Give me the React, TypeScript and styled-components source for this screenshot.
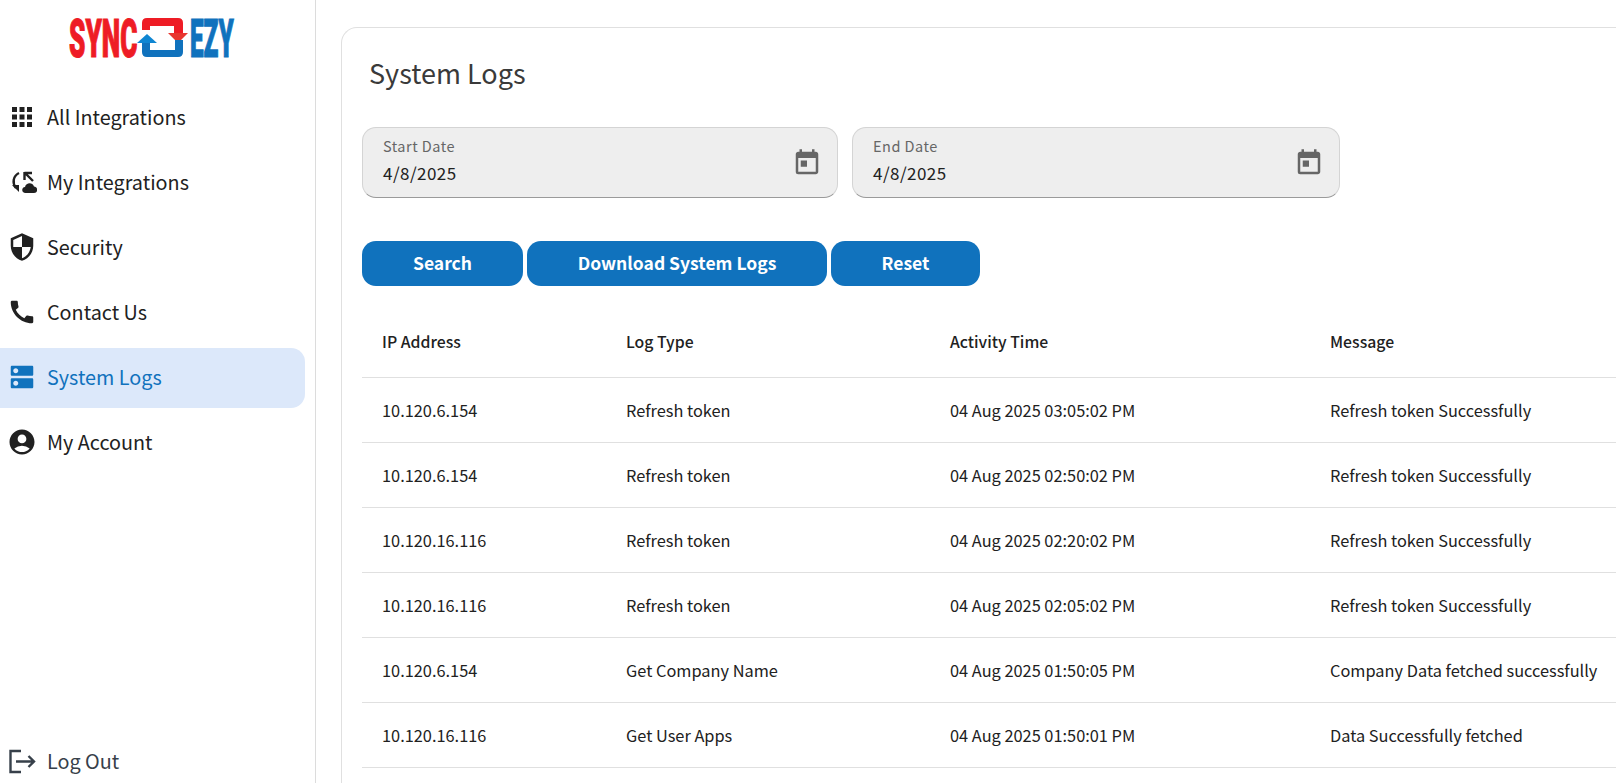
import React from "react";
import styled, { createGlobalStyle } from "styled-components";
import { MdApps, MdSecurity, MdCall, MdDns, MdAccountCircle, MdToday } from "react-icons/md";

const GlobalStyle = createGlobalStyle`
  html, body {
    margin: 0;
    padding: 0;
    height: 100%;
    overflow: hidden;
    background: #fff;
  }
  body {
    font-family: "Noto Sans CJK SC", "Noto Sans", sans-serif;
    color: #212121;
  }
`;

const Page = styled.div`
  display: flex;
  width: 1616px;
  height: 783px;
  overflow: hidden;
`;

const Sidebar = styled.aside`
  flex: 0 0 316px;
  box-sizing: border-box;
  border-right: 1px solid #dcdcdc;
  display: flex;
  flex-direction: column;
  padding: 18px 10px 0 0;
`;

const LogoWrap = styled.div`
  height: 40px;
  padding-left: 69px;
  margin-bottom: 30px;
  svg {
    display: block;
    margin-top: -14px;
  }
`;

const NavList = styled.nav`
  display: flex;
  flex-direction: column;
  gap: 5px;
`;

const NavItem = styled.div<{ $active?: boolean }>`
  box-sizing: border-box;
  height: 60px;
  display: flex;
  align-items: center;
  gap: 10px;
  padding: 0 0 2px 7px;
  border-radius: 0 14px 14px 0;
  font-size: 19.8px;
  line-height: 28px;
  background: ${(p) => (p.$active ? "#dce8fa" : "transparent")};
  color: ${(p) => (p.$active ? "#1072bd" : "#212121")};
  svg {
    width: 30px;
    height: 30px;
    flex: none;
  }
`;

const LogoutRow = styled(NavItem)`
  height: 40px;
  margin-top: auto;
  margin-bottom: 1px;
  color: #37404a;
`;

const Main = styled.main`
  flex: 1;
  min-width: 0;
  padding: 27px 0 0 25px;
`;

const Card = styled.section`
  box-sizing: border-box;
  height: 800px;
  border: 1px solid #e0e0e0;
  border-right: none;
  border-radius: 16px 0 0 0;
  padding: 27px 0 0 20px;
`;

const Title = styled.h1`
  margin: 0 0 36px 7px;
  font-size: 27px;
  line-height: 36px;
  font-weight: 400;
  color: #3a3a3a;
`;

const Fields = styled.div`
  display: flex;
  gap: 14px;
  margin-bottom: 43px;
`;

const Field = styled.div<{ $width: number }>`
  box-sizing: border-box;
  width: ${(p) => p.$width}px;
  height: 71px;
  background: #eeeeee;
  border: 1px solid #d4d4d4;
  border-bottom-color: #9a9a9a;
  border-radius: 14px;
  padding: 8px 15px 0 20px;
  display: flex;
  align-items: center;
  justify-content: space-between;
`;

const FieldText = styled.div`
  display: flex;
  flex-direction: column;
  align-self: flex-start;
`;

const FieldLabel = styled.span`
  font-size: 14.5px;
  line-height: 20px;
  letter-spacing: 0.5px;
  color: #666;
`;

const FieldValue = styled.span`
  font-size: 17px;
  line-height: 33px;
  letter-spacing: 0.45px;
  color: #212121;
`;

const CalendarIcon = styled(MdToday)`
  width: 30px;
  height: 30px;
  color: #666;
  margin-top: -8px;
`;

const Buttons = styled.div`
  display: flex;
  gap: 4px;
  margin-bottom: 21px;
`;

const Button = styled.button<{ $width: number }>`
  width: ${(p) => p.$width}px;
  height: 45px;
  padding: 0 0 3px;
  border: none;
  border-radius: 14px;
  background: #1072bd;
  color: #fff;
  font-family: inherit;
  font-size: 17.5px;
  font-weight: 700;
`;

const Table = styled.div`
  width: 1300px;
`;

const Row = styled.div<{ $head?: boolean }>`
  display: grid;
  grid-template-columns: 244px 324px 380px 1fr;
  align-items: center;
  box-sizing: border-box;
  height: ${(p) => (p.$head ? 71 : 65)}px;
  padding: 0 0 ${(p) => (p.$head ? 2 : 1)}px 20px;
  border-bottom: 1px solid #e0e0e0;
  font-size: ${(p) => (p.$head ? 15.8 : 16.35)}px;
  font-weight: ${(p) => (p.$head ? 500 : 400)};
  color: #212121;
`;

const rows = [
  ["10.120.6.154", "Refresh token", "04 Aug 2025 03:05:02 PM", "Refresh token Successfully"],
  ["10.120.6.154", "Refresh token", "04 Aug 2025 02:50:02 PM", "Refresh token Successfully"],
  ["10.120.16.116", "Refresh token", "04 Aug 2025 02:20:02 PM", "Refresh token Successfully"],
  ["10.120.16.116", "Refresh token", "04 Aug 2025 02:05:02 PM", "Refresh token Successfully"],
  ["10.120.6.154", "Get Company Name", "04 Aug 2025 01:50:05 PM", "Company Data fetched successfully"],
  ["10.120.16.116", "Get User Apps", "04 Aug 2025 01:50:01 PM", "Data Successfully fetched"],
];

function Logo() {
  return (
    <svg width="170" height="68" viewBox="0 -14 170 68">
      <text transform="translate(0 39) scale(0.485 1)" fontFamily="Roboto, sans-serif" fontWeight="900" fontSize="54" fill="#ee1c25" stroke="#ee1c25" strokeWidth="1.2">SYNC</text>
      <path d="M73 12 V5 Q73 0 78 0 H109 Q114 0 114 5 V16 H105 V8 H81 V12 Z" fill="#ee1c25" />
      <path d="M99 15 H119 L109 25 Z" fill="#e8362f" />
      <path d="M73 24 V34 Q73 39 78 39 H109 Q114 39 114 34 V22 H106 V32 H81 V24 Z" fill="#1072bd" />
      <path d="M68 25 H88 L78 16 Z" fill="#0f86d2" />
      <text transform="translate(121 39) scale(0.45 1)" fontFamily="Roboto, sans-serif" fontWeight="900" fontSize="54" fill="#1072bd" stroke="#1072bd" strokeWidth="1.2">EZY</text>
    </svg>
  );
}

function SyncCloudIcon() {
  return (
    <svg viewBox="0 0 30 30" fill="none">
      <path d="M12 6 C6 9 5 16 9 21" stroke="currentColor" strokeWidth="2.4" />
      <path d="M5 18 H12 V25 Z" fill="currentColor" />
      <path d="M17.5 6 H25 M17.5 5 V13 M18 6 L26 14" stroke="currentColor" strokeWidth="2.4" />
      <path d="M18.5 26 C14.5 26 14 20.5 18 20 C19 15.5 25.5 15 27 19.5 C31 19.5 31.5 26 27 26 Z" fill="currentColor" />
    </svg>
  );
}

function LogoutIcon() {
  return (
    <svg viewBox="0 0 30 30" fill="none" stroke="currentColor" strokeWidth="2.4">
      <path d="M14 5 H3.5 V26 H14" />
      <path d="M9 15.5 H27 M21.5 10 L27 15.5 L21.5 21" />
    </svg>
  );
}

export default function App() {
  return (
    <>
      <GlobalStyle />
      <Page>
        <Sidebar>
          <LogoWrap>
            <Logo />
          </LogoWrap>
          <NavList>
            <NavItem><MdApps />All Integrations</NavItem>
            <NavItem><SyncCloudIcon />My Integrations</NavItem>
            <NavItem><MdSecurity />Security</NavItem>
            <NavItem><MdCall />Contact Us</NavItem>
            <NavItem $active><MdDns />System Logs</NavItem>
            <NavItem><MdAccountCircle />My Account</NavItem>
          </NavList>
          <LogoutRow><LogoutIcon />Log Out</LogoutRow>
        </Sidebar>
        <Main>
          <Card>
            <Title>System Logs</Title>
            <Fields>
              <Field $width={476}>
                <FieldText>
                  <FieldLabel>Start Date</FieldLabel>
                  <FieldValue>4/8/2025</FieldValue>
                </FieldText>
                <CalendarIcon />
              </Field>
              <Field $width={488}>
                <FieldText>
                  <FieldLabel>End Date</FieldLabel>
                  <FieldValue>4/8/2025</FieldValue>
                </FieldText>
                <CalendarIcon />
              </Field>
            </Fields>
            <Buttons>
              <Button $width={161}>Search</Button>
              <Button $width={300}>Download System Logs</Button>
              <Button $width={149}>Reset</Button>
            </Buttons>
            <Table>
              <Row $head>
                <span>IP Address</span>
                <span>Log Type</span>
                <span>Activity Time</span>
                <span>Message</span>
              </Row>
              {rows.map((r, i) => (
                <Row key={i}>
                  {r.map((c, j) => (
                    <span key={j}>{c}</span>
                  ))}
                </Row>
              ))}
            </Table>
          </Card>
        </Main>
      </Page>
    </>
  );
}
